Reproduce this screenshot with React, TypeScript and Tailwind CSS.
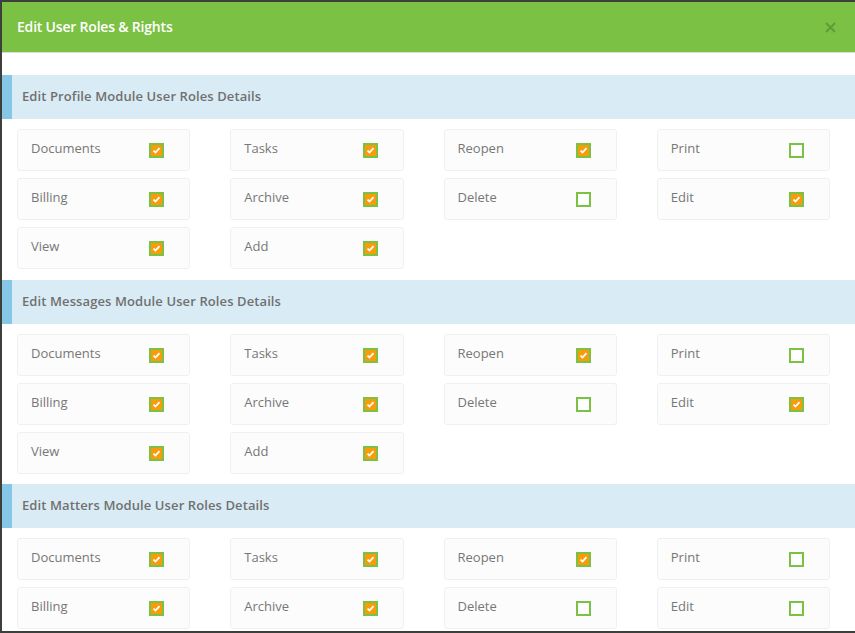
import React from "react";

type Item = { label: string; checked: boolean };

const sections: { title: string; items: Item[] }[] = [
  {
    title: "Edit Profile Module User Roles Details",
    items: [
      { label: "Documents", checked: true },
      { label: "Tasks", checked: true },
      { label: "Reopen", checked: true },
      { label: "Print", checked: false },
      { label: "Billing", checked: true },
      { label: "Archive", checked: true },
      { label: "Delete", checked: false },
      { label: "Edit", checked: true },
      { label: "View", checked: true },
      { label: "Add", checked: true },
    ],
  },
  {
    title: "Edit Messages Module User Roles Details",
    items: [
      { label: "Documents", checked: true },
      { label: "Tasks", checked: true },
      { label: "Reopen", checked: true },
      { label: "Print", checked: false },
      { label: "Billing", checked: true },
      { label: "Archive", checked: true },
      { label: "Delete", checked: false },
      { label: "Edit", checked: true },
      { label: "View", checked: true },
      { label: "Add", checked: true },
    ],
  },
  {
    title: "Edit Matters Module User Roles Details",
    items: [
      { label: "Documents", checked: true },
      { label: "Tasks", checked: true },
      { label: "Reopen", checked: true },
      { label: "Print", checked: false },
      { label: "Billing", checked: true },
      { label: "Archive", checked: true },
      { label: "Delete", checked: false },
      { label: "Edit", checked: false },
      { label: "View", checked: true },
      { label: "Add", checked: true },
    ],
  },
];

function Check({ checked }: { checked: boolean }) {
  return (
    <div
      className={
        "w-[15px] h-[15px] border-2 border-[#7bc143] flex items-center justify-center " +
        (checked ? "bg-[#f99c0b]" : "bg-white")
      }
    >
      {checked && (
        <svg width="9" height="9" viewBox="0 0 9 9">
          <path d="M1.5 4.6 L3.5 6.5 L7.5 2.2" stroke="white" strokeWidth="1.8" fill="none" />
        </svg>
      )}
    </div>
  );
}

export default function App() {
  return (
    <div
      className="w-[855px] h-[633px] overflow-hidden bg-[#3c3f3a] pt-[2px] pl-[2px] pb-[2px]"
      style={{ fontFamily: '"Open Sans", "Noto Sans", sans-serif' }}
    >
      <div className="w-[860px] h-full bg-white overflow-hidden">
        <div className="h-[51px] bg-[#7bc143] flex items-center justify-between pl-[15px] pr-[20px] border-b border-[#dcdcdc]">
          <span className="text-white text-[14px] font-semibold tracking-[-0.2px] -mt-[2px]">Edit User Roles &amp; Rights</span>
          <svg width="11" height="11" viewBox="0 0 11 11" className="mr-[6px]">
            <path d="M1 1 L10 10 M10 1 L1 10" stroke="#5e9c3a" strokeWidth="2" />
          </svg>
        </div>
        <div className="pt-[22px]">
          {sections.map((s, si) => (
            <div key={si} className="mb-[11px] last:mb-0 [&:nth-child(2)]:mb-[10px]">
              <div className="h-[44px] bg-[#d9ecf5] border-l-[10px] border-[#86c6e6] flex items-center pl-[10px]">
                <span className="text-[13px] font-semibold text-[#707070] tracking-[0.1px]">{s.title}</span>
              </div>
              <div className="grid grid-cols-4 w-[853px] mt-[10px] gap-y-[7px]">
                {s.items.map((it, i) => (
                  <div key={i} className="pl-[15px] pr-[25px]">
                    <div className="h-[42px] bg-[#fcfcfc] border border-[#f0f0f0] rounded-[3px] flex items-center justify-between pl-[13px] pr-[25px]">
                      <span className="text-[13px] text-[#777] -mt-[3px]">{it.label}</span>
                      <Check checked={it.checked} />
                    </div>
                  </div>
                ))}
              </div>
            </div>
          ))}
        </div>
      </div>
    </div>
  );
}
